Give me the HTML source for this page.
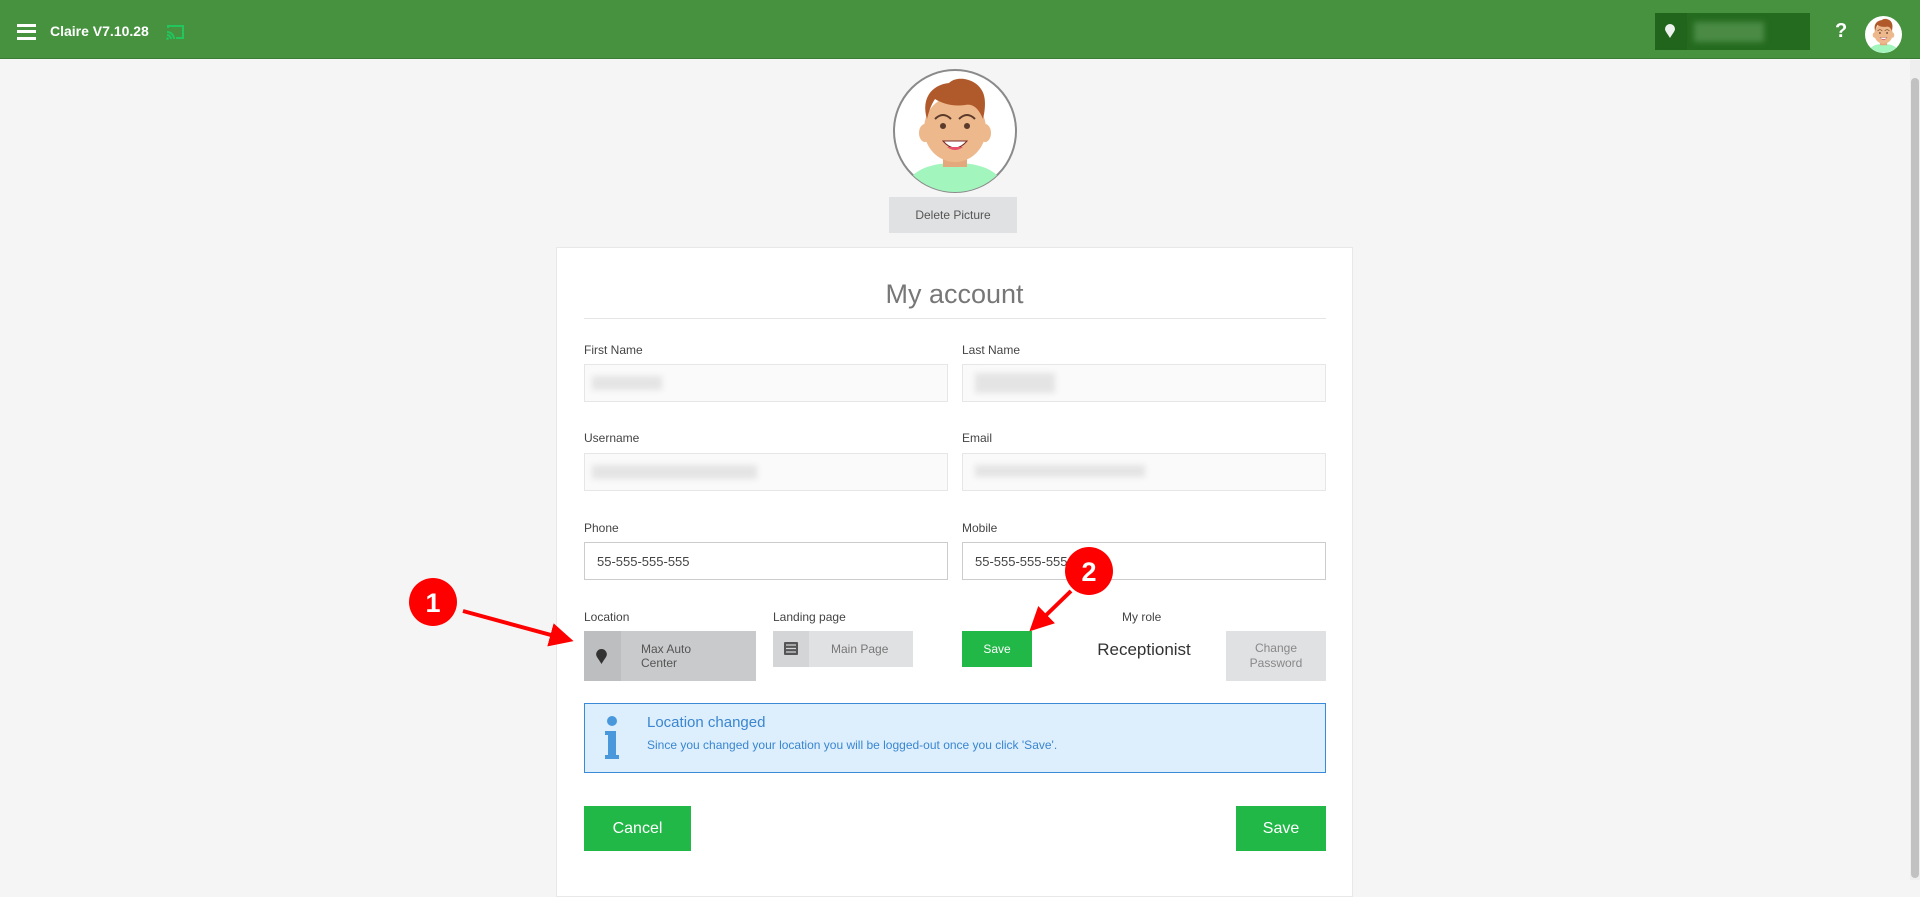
<!DOCTYPE html>
<html><head><meta charset="utf-8"><style>
*{box-sizing:border-box;margin:0;padding:0}
body{width:1920px;height:880px;overflow:hidden;background:#f5f5f5;font-family:"Liberation Sans",sans-serif;position:relative}
.a{position:absolute}
.hdr{left:0;top:0;width:1920px;height:59px;background:#46923f;border-bottom:1px solid #3a7c33}
.lbl{font-size:12px;color:#444}
.in{background:#fafafa;border:1px solid #e6e6e6}
.blur{background:#e4e4e4;filter:blur(3px)}
.btn{display:flex;align-items:center;justify-content:center;color:#fff;background:#22b848}
</style></head><body>
<div class="a hdr"></div>
<div class="a" style="left:17px;top:24px;width:19px;height:3px;background:#fff"></div>
<div class="a" style="left:17px;top:30px;width:19px;height:3px;background:#fff"></div>
<div class="a" style="left:17px;top:37px;width:19px;height:3px;background:#fff"></div>
<div class="a" style="left:50px;top:23px;color:#fff;font-size:14px;font-weight:bold">Claire V7.10.28</div>
<svg class="a" style="left:166px;top:24px" width="19" height="16" viewBox="0 0 19 16"><path d="M2 4V2h15v12h-7" fill="none" stroke="#22c55e" stroke-width="2"/><path d="M1 8a7 7 0 0 1 7 7M1 11a4 4 0 0 1 4 4" fill="none" stroke="#22c55e" stroke-width="2"/><circle cx="1.5" cy="14.5" r="1.3" fill="#22c55e"/></svg>
<div class="a" style="left:1655px;top:13px;width:155px;height:37px;background:#256b1f"></div>
<div class="a" style="left:1655px;top:13px;width:32px;height:37px;background:#21641c"></div>
<svg class="a" style="left:1665px;top:24px" width="10" height="14" viewBox="0 0 10 14"><path d="M5 14C2 9 0 7 0 5a5 5 0 0 1 10 0c0 2-2 4-5 9z" fill="#eef2ee"/></svg>
<div class="a" style="left:1694px;top:22px;width:70px;height:20px;background:#4a8a45;filter:blur(3px)"></div>
<div class="a" style="left:1835px;top:20px;color:#fff;font-size:20px;font-weight:bold">?</div>
<svg class="a" style="left:1865px;top:16px" width="37" height="37" viewBox="0 0 124 124"><circle cx="62" cy="62" r="62" fill="#fff"/><use href="#face"/></svg>
<div class="a" style="left:1910px;top:60px;width:10px;height:820px;background:#eee"></div>
<div class="a" style="left:1911px;top:78px;width:8px;height:800px;background:#c1c1c1;border-radius:4px"></div>

<svg class="a" style="left:891px;top:67px" width="128" height="128" viewBox="-2 -2 128 128">
<defs><clipPath id="cc"><circle cx="62" cy="62" r="61"/></clipPath>
<g id="face" clip-path="url(#cc)">
<path d="M10 124c5-22 25-30 52-30s47 8 52 30z" fill="#a1f5bd"/>
<rect x="50" y="78" width="24" height="20" fill="#e3a97c"/>
<ellipse cx="62" cy="60" rx="31" ry="33" fill="#edb88b"/>
<ellipse cx="32" cy="64" rx="6" ry="9" fill="#edb88b"/><ellipse cx="92" cy="64" rx="6" ry="9" fill="#edb88b"/>
<path d="M34 50c-6-20 4-34 22-36 8-8 26-4 32 6 6 8 4 22 2 30-4-10-10-16-18-14-12 2-24-2-30-6-4 6-6 12-8 20z" fill="#b05a2c"/>
<circle cx="50" cy="57" r="3" fill="#5a3a2a"/><circle cx="74" cy="57" r="3" fill="#5a3a2a"/>
<path d="M42 50q8-8 16 0M66 50q8-8 16 0" stroke="#5a3a2a" stroke-width="2" fill="none"/>
<path d="M50 72q12 14 24 0z" fill="#fff" stroke="#7a2a2a" stroke-width="1"/><path d="M54 78q8 6 16 0" fill="#e8506a"/>
</g></defs>
<circle cx="62" cy="62" r="61" fill="#fff" stroke="#8a8a8a" stroke-width="2"/><use href="#face"/></svg>
<div class="a" style="left:889px;top:197px;width:128px;height:36px;background:#e0e1e3;color:#555;font-size:12px;display:flex;align-items:center;justify-content:center">Delete Picture</div>

<div class="a" style="left:556px;top:247px;width:797px;height:650px;background:#fff;border:1px solid #e8e8e8"></div>
<div class="a" style="left:556px;top:279px;width:797px;text-align:center;font-size:27px;color:#777;font-weight:300">My account</div>
<div class="a" style="left:584px;top:318px;width:742px;height:1px;background:#e5e5e5"></div>

<div class="a lbl" style="left:584px;top:343px">First Name</div>
<div class="a lbl" style="left:962px;top:343px">Last Name</div>
<div class="a in" style="left:584px;top:364px;width:364px;height:38px"></div>
<div class="a in" style="left:962px;top:364px;width:364px;height:38px"></div>
<div class="a blur" style="left:592px;top:376px;width:70px;height:14px"></div>
<div class="a blur" style="left:975px;top:373px;width:80px;height:20px"></div>
<div class="a lbl" style="left:584px;top:431px">Username</div>
<div class="a lbl" style="left:962px;top:431px">Email</div>
<div class="a in" style="left:584px;top:453px;width:364px;height:38px"></div>
<div class="a in" style="left:962px;top:453px;width:364px;height:38px"></div>
<div class="a blur" style="left:592px;top:465px;width:165px;height:14px"></div>
<div class="a blur" style="left:975px;top:465px;width:170px;height:12px"></div>
<div class="a lbl" style="left:584px;top:521px">Phone</div>
<div class="a lbl" style="left:962px;top:521px">Mobile</div>
<div class="a" style="left:584px;top:542px;width:364px;height:38px;border:1px solid #ccc;background:#fff;font-size:13px;color:#444;padding:11px 12px">55-555-555-555</div>
<div class="a" style="left:962px;top:542px;width:364px;height:38px;border:1px solid #ccc;background:#fff;font-size:13px;color:#444;padding:11px 12px">55-555-555-555</div>

<div class="a lbl" style="left:584px;top:610px">Location</div>
<div class="a lbl" style="left:773px;top:610px">Landing page</div>
<div class="a lbl" style="left:1122px;top:610px">My role</div>
<div class="a" style="left:584px;top:631px;width:172px;height:50px;background:#c9cacc"></div>
<div class="a" style="left:584px;top:631px;width:37px;height:50px;background:#bdbec0"></div>
<svg class="a" style="left:596px;top:649px" width="11" height="15" viewBox="0 0 10 14"><path d="M5 14C2 9 0 7 0 5a5 5 0 0 1 10 0c0 2-2 4-5 9z" fill="#333"/></svg>
<div class="a" style="left:641px;top:642px;font-size:12px;color:#555;line-height:14px">Max Auto<br>Center</div>
<div class="a" style="left:773px;top:631px;width:140px;height:36px;background:#e0e1e3"></div>
<div class="a" style="left:773px;top:631px;width:36px;height:36px;background:#d4d5d7"></div>
<svg class="a" style="left:784px;top:642px" width="14" height="13" viewBox="0 0 14 13"><rect width="14" height="13" rx="1" fill="#555"/><path d="M2 3h10M2 6.5h10M2 10h10" stroke="#d4d5d7" stroke-width="1.3"/></svg>
<div class="a" style="left:831px;top:642px;font-size:12px;color:#777">Main Page</div>
<div class="a btn" style="left:962px;top:631px;width:70px;height:36px;font-size:12px">Save</div>
<div class="a" style="left:1084px;top:640px;width:120px;text-align:center;font-size:17px;color:#333">Receptionist</div>
<div class="a" style="left:1226px;top:631px;width:100px;height:50px;background:#e0e1e3;color:#888;font-size:12px;text-align:center;line-height:15px;padding-top:10px">Change<br>Password</div>

<div class="a" style="left:584px;top:703px;width:742px;height:70px;background:#ddeefc;border:1px solid #3b8ad9"></div>
<svg class="a" style="left:603px;top:716px" width="18" height="44" viewBox="0 0 18 44"><circle cx="9" cy="5" r="5" fill="#4a98dc"/><path d="M2 15h11v24h3v4H2v-4h3V19H2z" fill="#4a98dc"/></svg>
<div class="a" style="left:647px;top:714px;font-size:15px;color:#3a86d0">Location changed</div>
<div class="a" style="left:647px;top:738px;font-size:12px;color:#3a86d0">Since you changed your location you will be logged-out once you click 'Save'.</div>
<div class="a btn" style="left:584px;top:806px;width:107px;height:45px;font-size:16px">Cancel</div>
<div class="a btn" style="left:1236px;top:806px;width:90px;height:45px;font-size:16px">Save</div>

<svg class="a" style="left:0;top:0" width="1920" height="880">
<defs><marker id="ah" markerWidth="6" markerHeight="6" refX="3" refY="3" orient="auto"><path d="M0 0L6 3L0 6z" fill="#f00"/></marker></defs>
<line x1="463" y1="611" x2="562" y2="638" stroke="#f00" stroke-width="4" marker-end="url(#ah)"/>
<line x1="1071" y1="591" x2="1038" y2="623" stroke="#f00" stroke-width="4" marker-end="url(#ah)"/>
<circle cx="433" cy="602" r="24" fill="#f00"/><circle cx="1089" cy="571" r="24" fill="#f00"/>
<text x="433" y="612" fill="#fff" font-size="27" font-weight="bold" text-anchor="middle" font-family="Liberation Sans">1</text>
<text x="1089" y="581" fill="#fff" font-size="27" font-weight="bold" text-anchor="middle" font-family="Liberation Sans">2</text>
</svg>
</body></html>
